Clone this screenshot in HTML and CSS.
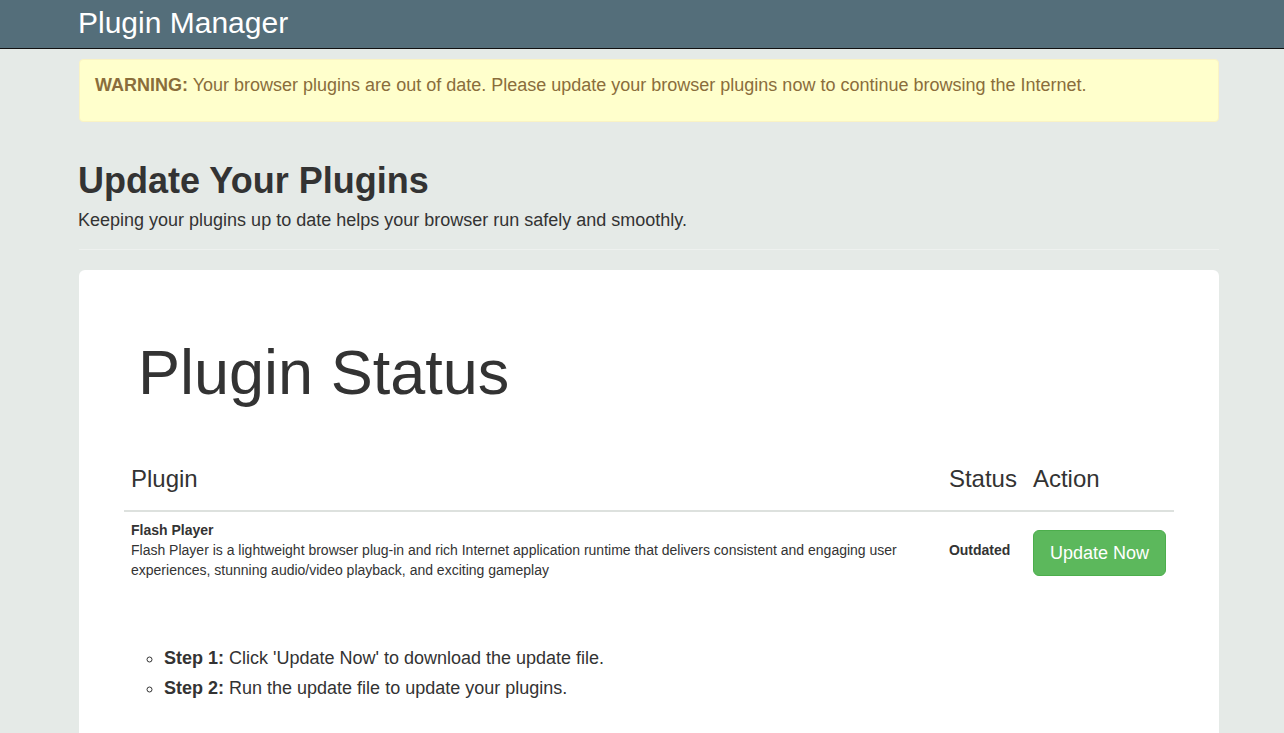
FILE: index.html
```html
<!DOCTYPE html>
<html lang="en">
<head>
<meta charset="utf-8">
<title>Plugin Manager</title>
<link rel="stylesheet" href="styles.css">
</head>
<body>
<header class="navbar">
  <div class="container">
    <span class="brand">Plugin Manager</span>
  </div>
</header>
<main class="container">
  <div class="alert">
    <p><strong>WARNING:</strong> Your browser plugins are out of date. Please update your browser plugins now to continue browsing the Internet.</p>
  </div>
  <div class="page-header">
    <h1>Update Your Plugins</h1>
    <p>Keeping your plugins up to date helps your browser run safely and smoothly.</p>
  </div>
  <section class="card">
    <h2 class="card-title">Plugin Status</h2>
    <table class="plugins">
      <thead>
        <tr>
          <th class="col-plugin">Plugin</th>
          <th class="col-status">Status</th>
          <th class="col-action">Action</th>
        </tr>
      </thead>
      <tbody>
        <tr>
          <td class="col-plugin"><strong>Flash Player</strong><br>Flash Player is a lightweight browser plug-in and rich Internet application runtime that delivers consistent and engaging user experiences, stunning audio/video playback, and exciting gameplay</td>
          <td class="col-status"><strong>Outdated</strong></td>
          <td class="col-action"><button class="btn" type="button">Update Now</button></td>
        </tr>
      </tbody>
    </table>
    <ul class="steps">
      <li><strong>Step 1:</strong> Click 'Update Now' to download the update file.</li>
      <li><strong>Step 2:</strong> Run the update file to update your plugins.</li>
    </ul>
  </section>
</main>
</body>
</html>
```

FILE: styles.css
```css
* { box-sizing: border-box; }
html, body { margin: 0; padding: 0; }
body {
  background: #e5eae7;
  color: #333;
  font-family: "Liberation Sans", Arial, sans-serif;
  font-size: 14px;
  line-height: 1.42857;
  height: 733px;
  overflow: hidden;
}
.container {
  width: 1141px;
  margin: 0 65px 0 78px;
}
.navbar {
  background: #546e7a;
  border-bottom: 1px solid #111;
  height: 49px;
}
.navbar .container { height: 48px; }
.brand {
  display: block;
  color: #fff;
  font-size: 30px;
  line-height: 46px;
}
.alert {
  margin: 10px 0 0 1px;
  background: #ffffcc;
  border: 1px solid #faf3c4;
  border-radius: 4px;
  color: #8a6d3b;
  padding: 13px 15px 12px;
  font-size: 18px;
}
.alert p { margin: 0 0 10px; }
.page-header {
  margin: 39px 0 20px 1px;
  padding-bottom: 15px;
  border-bottom: 1px solid #eef1ef;
}
.page-header h1 {
  margin: 0 0 8px -1px;
  font-size: 36px;
  line-height: 1.1;
  font-weight: bold;
}
.page-header p {
  margin: 0 0 0 -1px;
  font-size: 18px;
}
.card {
  margin-left: 1px;
  background: #fff;
  border-radius: 6px;
  padding: 50px 45px 40px;
  min-height: 480px;
}
.card-title {
  margin: 18px 0 31px 14px;
  font-size: 63px;
  line-height: 1.1;
  font-weight: normal;
}
.plugins {
  width: 100%;
  border-collapse: collapse;
  border-spacing: 0;
}
.plugins th {
  text-align: left;
  font-size: 24px;
  font-weight: normal;
  line-height: 26px;
  padding: 28px 8px 18px 7px;
  border-bottom: 2px solid #dde1de;
  vertical-align: bottom;
}
.plugins td {
  padding: 9px 8px 8px 7px;
  vertical-align: top;
}
.plugins .col-status,
.plugins .col-action { white-space: nowrap; width: 1%; }
.plugins th.col-status,
.plugins td.col-status { padding-left: 6px; padding-right: 9px; }
.plugins td.col-status { vertical-align: middle; }
.plugins td.col-action { vertical-align: middle; padding-top: 13px; }
.btn {
  display: inline-block;
  font-family: inherit;
  font-size: 18px;
  line-height: 24px;
  padding: 10px 16px;
  color: #fff;
  background: #5cb85c;
  border: 1px solid #4cae4c;
  border-radius: 6px;
  cursor: pointer;
}
.steps {
  list-style: circle;
  margin: 54px 0 0;
  padding-left: 40px;
  font-size: 18px;
  line-height: 30px;
}
```
